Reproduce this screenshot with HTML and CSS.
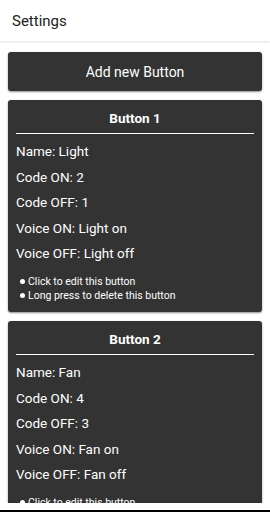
FILE: index.html
```html
<!DOCTYPE html>
<html lang="en">
<head>
    <meta charset="UTF-8">
    <meta name="viewport" content="width=device-width, initial-scale=1.0">
    <title>Settings</title>
    <link rel="stylesheet" href="styles.css">
</head>
<body>
    <div class="screen">
        <header class="app-bar">Settings</header>
        <div class="list">
            <div class="add-button">Add new Button</div>

            <div class="card">
                <div class="card-title">Button 1</div>
                <div class="row">Name: Light</div>
                <div class="row">Code ON: 2</div>
                <div class="row">Code OFF: 1</div>
                <div class="row">Voice ON: Light on</div>
                <div class="row">Voice OFF: Light off</div>
                <ul class="hints">
                    <li>Click to edit this button</li>
                    <li>Long press to delete this button</li>
                </ul>
            </div>

            <div class="card">
                <div class="card-title">Button 2</div>
                <div class="row">Name: Fan</div>
                <div class="row">Code ON: 4</div>
                <div class="row">Code OFF: 3</div>
                <div class="row">Voice ON: Fan on</div>
                <div class="row">Voice OFF: Fan off</div>
                <ul class="hints">
                    <li>Click to edit this button</li>
                    <li>Long press to delete this button</li>
                </ul>
            </div>
        </div>
        <div class="bottom-space"></div>
        <div class="nav-line"></div>
    </div>
</body>
</html>
```

FILE: styles.css
```css
body {
    margin: 0;
    padding: 0;
    background-color: #fff;
    font-family: Roboto, 'Noto Sans', sans-serif;
}
.screen {
    height: 512px;
    display: flex;
    flex-direction: column;
    overflow: hidden;
}
.app-bar {
    flex-shrink: 0;
    height: 41px;
    line-height: 42px;
    padding-left: 12px;
    font-size: 15px;
    color: #212121;
    background-color: #fff;
    box-shadow: 0 1px 2px rgba(0, 0, 0, 0.12);
    position: relative;
    z-index: 1;
}
.list {
    flex-shrink: 0;
    height: 462px;
    overflow: hidden;
    padding: 11px 8px 0 8px;
    box-sizing: border-box;
    display: flex;
    flex-direction: column;
    gap: 9px;
}
.add-button {
    flex-shrink: 0;
    height: 39px;
    line-height: 40px;
    text-align: center;
    font-size: 14px;
    color: #fff;
    background-color: #333;
    border-radius: 3px;
    box-shadow: 0 1px 2px rgba(0, 0, 0, 0.45);
}
.card {
    flex-shrink: 0;
    background-color: #333;
    color: #fff;
    border-radius: 3px;
    box-shadow: 0 1px 2px rgba(0, 0, 0, 0.45);
    padding: 8px 8px 9px 8px;
}
.card-title {
    text-align: center;
    font-weight: bold;
    font-size: 13.5px;
    line-height: 20px;
    padding-bottom: 5px;
    border-bottom: 1px solid #fff;
    margin-bottom: 5px;
}
.row {
    font-size: 13.5px;
    line-height: 25.5px;
}
.hints {
    margin: 8.5px 0 0 0;
    padding: 0 0 0 4px;
    list-style: none;
    font-size: 10.5px;
    line-height: 14px;
}
.hints li::before {
    content: "";
    display: inline-block;
    width: 5px;
    height: 5px;
    border-radius: 50%;
    background-color: #fff;
    margin-right: 3px;
    vertical-align: 1px;
}
.bottom-space {
    flex-shrink: 0;
    height: 7px;
}
.nav-line {
    flex-shrink: 0;
    height: 2px;
    background-color: #000;
}
```
